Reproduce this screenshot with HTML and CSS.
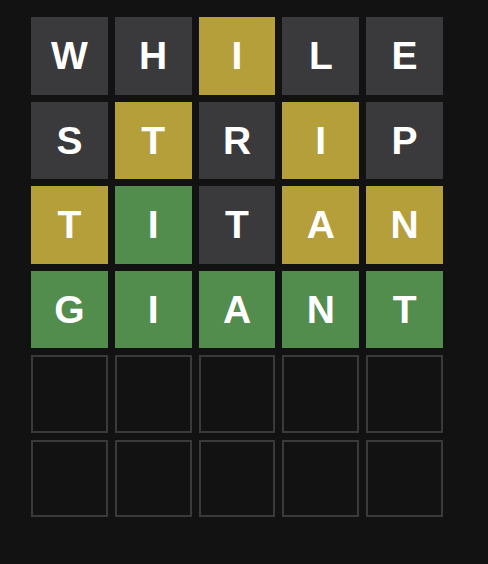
FILE: index.html
```html
<!DOCTYPE html>
<html>
<head>
<meta charset="utf-8">
<link rel="stylesheet" href="styles.css">
</head>
<body>
<div class="board">
  <div class="tile absent">W</div><div class="tile absent">H</div><div class="tile present">I</div><div class="tile absent">L</div><div class="tile absent">E</div>
  <div class="tile absent">S</div><div class="tile present">T</div><div class="tile absent">R</div><div class="tile present">I</div><div class="tile absent">P</div>
  <div class="tile present">T</div><div class="tile correct">I</div><div class="tile absent">T</div><div class="tile present">A</div><div class="tile present">N</div>
  <div class="tile correct">G</div><div class="tile correct">I</div><div class="tile correct">A</div><div class="tile correct">N</div><div class="tile correct">T</div>
  <div class="tile empty"></div><div class="tile empty"></div><div class="tile empty"></div><div class="tile empty"></div><div class="tile empty"></div>
  <div class="tile empty"></div><div class="tile empty"></div><div class="tile empty"></div><div class="tile empty"></div><div class="tile empty"></div>
</div>
</body>
</html>
```
FILE: styles.css
```css
html, body {
  margin: 0;
  padding: 0;
  background: #121213;
}
body {
  padding: 17px 0 0 31px;
  width: 488px;
  height: 564px;
  box-sizing: border-box;
  overflow: hidden;
}
.board {
  width: 412px;
  height: 500px;
  display: grid;
  grid-template-columns: repeat(5, 1fr);
  grid-template-rows: repeat(6, 1fr);
  gap: 7px;
}
.tile {
  display: flex;
  align-items: center;
  justify-content: center;
  font-family: "Liberation Sans", Arial, sans-serif;
  font-weight: bold;
  font-size: 39px;
  line-height: 1;
  color: #ffffff;
  text-transform: uppercase;
  box-sizing: border-box;
}
.absent { background: #3a3a3c; }
.present { background: #b59f3b; }
.correct { background: #538d4e; }
.empty { border: 2px solid #3a3a3c; }
```
